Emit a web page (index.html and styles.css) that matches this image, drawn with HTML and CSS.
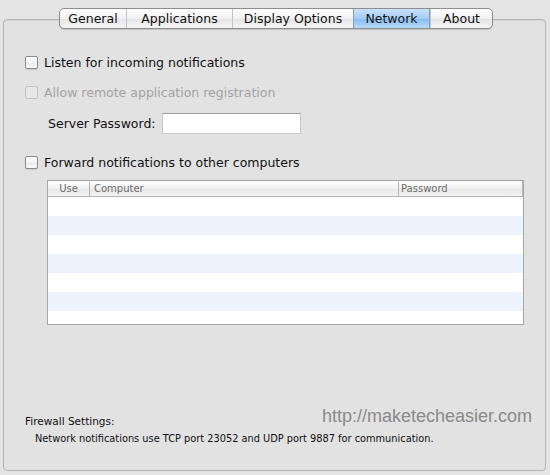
FILE: index.html
```html
<!DOCTYPE html>
<html>
<head>
<meta charset="utf-8">
<link rel="stylesheet" href="styles.css">
</head>
<body>
<div class="window">
  <div class="panel">
    <div class="tabs">
      <div class="tab">General</div>
      <div class="tab">Applications</div>
      <div class="tab">Display Options</div>
      <div class="tab active">Network</div>
      <div class="tab">About</div>
    </div>
    <div class="content">
      <label class="check row1"><span class="box"></span>Listen for incoming notifications</label>
      <label class="check disabled row2"><span class="box"></span>Allow remote application registration</label>
      <div class="pwd"><span>Server Password:</span><span class="field"></span></div>
      <label class="check row3"><span class="box"></span>Forward notifications to other computers</label>
      <div class="table">
        <div class="thead">
          <div class="th c1">Use</div>
          <div class="th c2">Computer</div>
          <div class="th c3">Password</div>
        </div>
        <div class="tr"></div>
        <div class="tr alt"></div>
        <div class="tr"></div>
        <div class="tr alt"></div>
        <div class="tr"></div>
        <div class="tr alt"></div>
        <div class="tr last"></div>
      </div>
      <div class="footer">
        <div class="fw-row">
          <div class="fw-title">Firewall Settings:</div>
          <div class="watermark">http://maketecheasier.com</div>
        </div>
        <div class="fw-text">Network notifications use TCP port 23052 and UDP port 9887 for communication.</div>
      </div>
    </div>
  </div>
</div>
</body>
</html>
```
FILE: styles.css
```css
html, body {
  margin: 0;
  padding: 0;
  background: #e4e4e4;
  width: 550px;
  height: 475px;
  overflow: hidden;
  font-family: "DejaVu Sans", "Liberation Sans", sans-serif;
  color: #111;
}
.window {
  padding: 19px 4px 0 3px;
}
.panel {
  position: relative;
  height: 450px;
  border: 1px solid #b4b4b4;
  border-radius: 4px;
  background: #e2e2e2;
  box-shadow: inset 0 1px 1px rgba(0,0,0,0.06);
}
.tabs {
  position: absolute;
  top: -12px;
  left: 55px;
  display: flex;
  height: 19px;
  border: 1px solid #8e8e8e;
  border-radius: 5px;
  background: linear-gradient(#ffffff, #f0f0f0 50%, #e4e4e4 51%, #f4f4f4);
  box-shadow: 0 1px 1px rgba(0,0,0,0.15);
  overflow: hidden;
}
.tab {
  font-size: 12.5px;
  line-height: 19px;
  text-align: center;
  border-left: 1px solid #c4c4c4;
  color: #111;
}
.tab:first-child { border-left: none; width: 66px; }
.tab:nth-child(2) { width: 105px; }
.tab:nth-child(3) { width: 120px; }
.tab:nth-child(4) { width: 76px; }
.tab:nth-child(5) { width: 61px; }
.tab.active {
  background: linear-gradient(#c9e0fa, #a4ccf6 50%, #88bcf3 51%, #b8daf8);
  border-left-color: #7e9fc6;
  border-right: 1px solid #7e9fc6;
  width: 75px;
}
.content {
  padding: 33px 0 0 21px;
}
.check {
  display: flex;
  align-items: center;
  font-size: 12.5px;
  height: 18px;
}
.box {
  width: 11px;
  height: 11px;
  border: 1px solid #8a8a8a;
  border-radius: 2px;
  background: linear-gradient(#ffffff, #f2f2f2 50%, #e9e9e9 51%, #f9f9f9);
  margin-right: 6px;
  box-shadow: 0 1px 1px rgba(0,0,0,0.1);
}
.disabled { color: #a2a2a2; }
.disabled .box { border-color: #c2c2c2; background: #e6e6e6; box-shadow: none; }
.row2 { margin-top: 12px; }
.pwd {
  display: flex;
  align-items: center;
  margin-top: 12px;
  margin-left: 23px;
  font-size: 12.5px;
  height: 21px;
}
.field {
  width: 137px;
  height: 19px;
  margin-left: 6px;
  background: #fff;
  border: 1px solid #c8c8c8;
  border-top-color: #9d9d9d;
}
.row3 { margin-top: 19px; }
.table {
  margin-top: 9px;
  margin-left: 22px;
  width: 475px;
  border: 1px solid #a6a6a6;
  background: #fff;
}
.thead {
  display: flex;
  height: 15px;
  border-bottom: 1px solid #b4b4b4;
  background: linear-gradient(#ffffff, #f0f0f0 50%, #e6e6e6 51%, #f3f3f3);
  font-size: 10px;
  line-height: 15px;
  color: #6c6c6c;
}
.th { box-sizing: border-box; }
.c1 { width: 42px; text-align: center; border-right: 1px solid #b4b4b4; }
.c2 { width: 309px; padding-left: 4px; border-right: 1px solid #b4b4b4; }
.c3 { flex: 1; padding-left: 2px; border-right: 1px solid #b4b4b4; }
.tr { height: 19px; }
.tr.alt { background: #edf3fd; }
.tr.last { height: 13px; }
.footer {
  margin-top: 81px;
}
.fw-row {
  display: flex;
  align-items: flex-end;
  justify-content: space-between;
  padding-right: 13px;
}
.fw-title {
  font-size: 10.5px;
}
.watermark {
  font-family: "Liberation Sans", Arial, sans-serif;
  font-size: 18px;
  color: #8a8a8a;
}
.fw-text {
  font-size: 9.8px;
  margin-top: 6px;
  margin-left: 10px;
}
```
